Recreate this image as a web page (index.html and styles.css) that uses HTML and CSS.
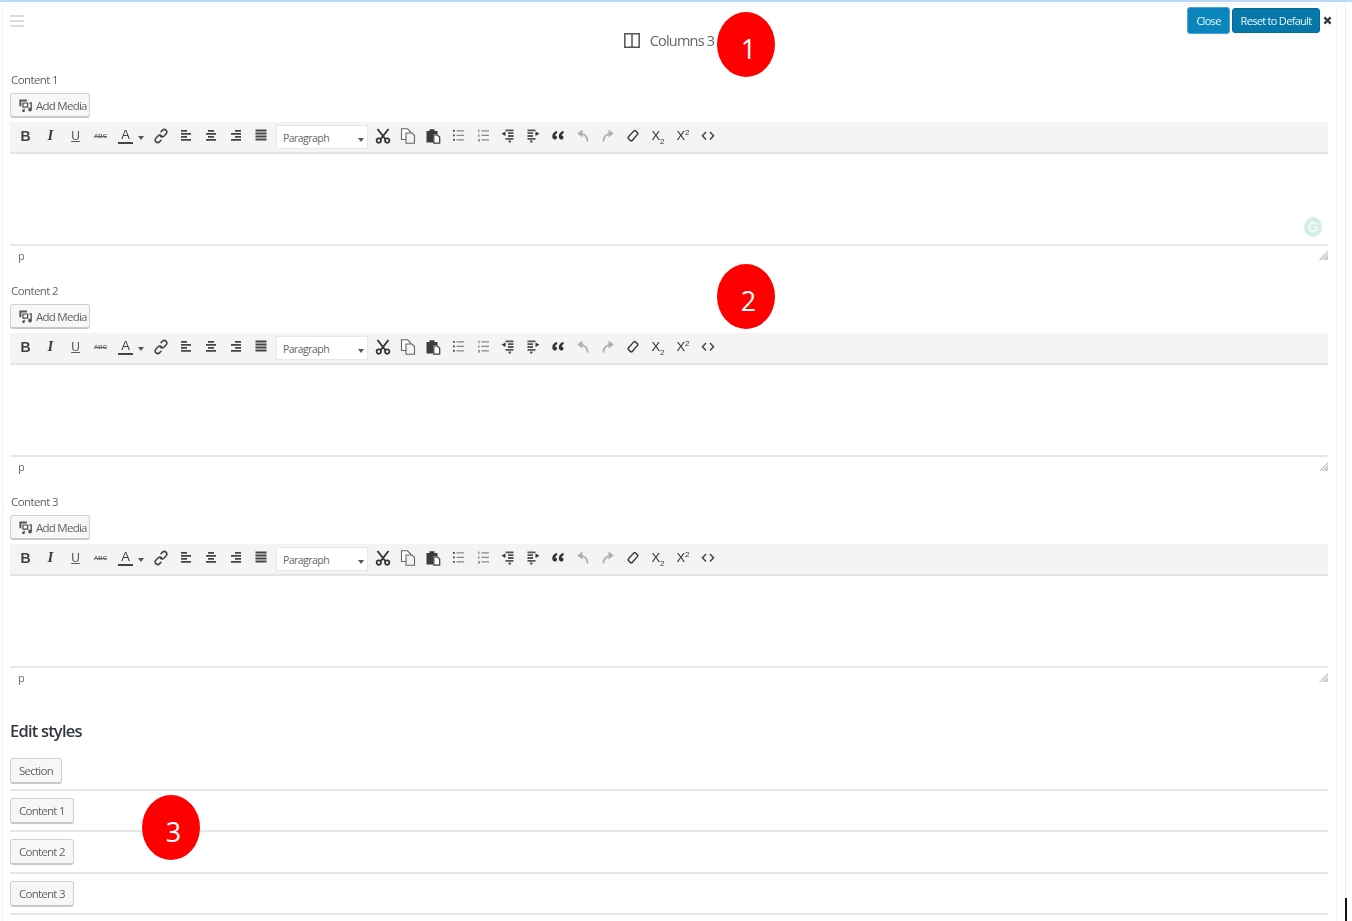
FILE: index.html
```html
<!DOCTYPE html>
<html lang="en">
<head>
<meta charset="utf-8">
<title>Columns 3</title>
<link rel="stylesheet" href="styles.css">
</head>
<body>
<svg class="defs" width="0" height="0" aria-hidden="true">
  <symbol id="i-media" viewBox="0 0 16 16"><path d="M1.500 1.500h8v2.200H3.600v5.200H1.500zM4.600 4.700h6.400v5.600H4.600z" fill="#555"/><path d="M6 6h3.600v3H6z" fill="#f7f7f7"/><path d="M12.200 4.500h2.600v7.700a2 2 0 1 1-1.400-1.800V6h-1.200zM7.300 11.400v2.300a1.500 1.500 0 1 1-1.300-1.400v-.9z" fill="#555"/></symbol>
  <symbol id="i-link" viewBox="0 0 16 16"><g fill="none" stroke="#444" stroke-width="1.600" stroke-linecap="round"><path d="M8 3.700l1.600-1.600a2.300 2.300 0 0 1 3.300 0l.3.300a2.300 2.300 0 0 1 0 3.300L10.800 8.200a2.300 2.300 0 0 1-3.300 0"/><path d="M8 12.300l-1.600 1.600a2.300 2.300 0 0 1-3.300 0l-.3-.3a2.300 2.300 0 0 1 0-3.300L5.200 7.800a2.300 2.300 0 0 1 3.300 0"/></g></symbol>
  <symbol id="i-al" viewBox="0 0 16 16"><path d="M3 2h6v1.800H3zM3 5h10v1.800H3zM3 8h6v1.800H3zM3 11h10v1.800H3z" fill="#444"/></symbol>
  <symbol id="i-ac" viewBox="0 0 16 16"><path d="M5 2h6v1.800H5zM3 5h10v1.800H3zM5 8h6v1.800H5zM3 11h10v1.800H3z" fill="#444"/></symbol>
  <symbol id="i-ar" viewBox="0 0 16 16"><path d="M7 2h6v1.800H7zM3 5h10v1.800H3zM7 8h6v1.800H7zM3 11h10v1.800H3z" fill="#444"/></symbol>
  <symbol id="i-aj" viewBox="0 0 16 16"><path d="M2.500 1.500h11v1.900h-11zM2.500 4.500h11v1.900h-11zM2.500 7.500h11v1.900h-11zM2.500 10.500h11v1.900h-11z" fill="#444"/></symbol>
  <symbol id="i-cut" viewBox="0 0 16 16"><g fill="none" stroke="#333" stroke-width="1.700"><circle cx="3.800" cy="12.600" r="2.200"/><circle cx="12.200" cy="12.600" r="2.200"/><path d="M2.500 1l7.800 10M13.500 1L5.700 11" stroke-width="1.900"/></g></symbol>
  <symbol id="i-copy" viewBox="0 0 16 16"><g fill="#fff" stroke="#666" stroke-width="1.100"><path d="M1.500 .8h6l3 3v7.700h-9z"/><path d="M6 5h6l2.500 2.500v7.700H6z" fill="#f3f3f3"/></g></symbol>
  <symbol id="i-paste" viewBox="0 0 16 16"><path d="M1.500 3h3V1.200h5V3h3v3H8v8.500H1.500z" fill="#3c3c3c"/><path d="M8.800 6.800h3.400l2.500 2.500v5.900H8.800z" fill="#fff" stroke="#3c3c3c" stroke-width="1.200"/></symbol>
  <symbol id="i-ul" viewBox="0 0 16 16"><path d="M3 2h1.800v1.800H3zM3 6.500h1.800v1.800H3zM3 11h1.800v1.800H3z" fill="#444"/><path d="M6.500 2.300H14v1.200H6.500zM6.500 6.800H14V8H6.500zM6.500 11.300H14v1.200H6.500z" fill="#888"/></symbol>
  <symbol id="i-ol" viewBox="0 0 16 16"><path d="M3.400 1.500h1v2.800h-1zM3 6.500h1.800v.8H3.800v.6h1v.6H3zM3 11h1.800v2.400H3v-.6h1v-.3H3.400v-.5h.6v-.3H3z" fill="#777"/><path d="M6.500 2.300H14v1.200H6.500zM6.500 6.800H14V8H6.500zM6.500 11.300H14v1.200H6.500z" fill="#888"/></symbol>
  <symbol id="i-out" viewBox="0 0 16 16"><path d="M5.500 1.500h8v1.800h-8zM8 4.300h5.500v1.800H8zM8 7.100h5.500v1.800H8zM5.500 9.900h8v1.800h-8zM8.500 12.500H11v2H8.500z" fill="#555"/><path d="M5.500 3.500v4.500L1.500 5.800z" fill="#333"/></symbol>
  <symbol id="i-in" viewBox="0 0 16 16"><path d="M2.500 1.500h8v1.800h-8zM2.500 4.300H8v1.800H2.500zM2.500 7.100H8v1.800H2.500zM2.500 9.900h8v1.800h-8zM5 12.500h2.500v2H5z" fill="#555"/><path d="M10.500 3.500v4.500l4-2.200z" fill="#333"/></symbol>
  <symbol id="i-quote" viewBox="0 0 16 16"><path d="M6.800 2.700C4.200 3.800 2.500 5.500 2.300 7.900 2.200 10 3.200 11.500 4.800 11.500c1.300 0 2.200-.9 2.200-2.100 0-1.200-.8-2-1.900-2 .2-1 .9-1.800 2.200-2.500zM13.300 2.700c-2.600 1.100-4.300 2.800-4.500 5.200-.1 2.100.9 3.600 2.500 3.600 1.300 0 2.200-.9 2.200-2.100 0-1.200-.8-2-1.900-2 .2-1 .9-1.800 2.200-2.500z" fill="#333"/></symbol>
  <symbol id="i-undo" viewBox="0 0 16 16"><path d="M12.500 13.500C12.500 8.500 10 5.800 4.500 5.600" fill="none" stroke="#b0b0b0" stroke-width="1.900"/><path d="M7.500 1.500v8L2.200 5.500z" fill="#b0b0b0"/></symbol>
  <symbol id="i-redo" viewBox="0 0 16 16"><path d="M3.500 13.500C3.500 8.500 6 5.800 11.500 5.600" fill="none" stroke="#b0b0b0" stroke-width="1.900"/><path d="M8.500 1.500v8l5.300-4z" fill="#b0b0b0"/></symbol>
  <symbol id="i-erase" viewBox="0 0 16 16"><path d="M3.500 8.800l5.400-5.900a1.200 1.200 0 0 1 1.700 0l1.900 1.800a1.200 1.200 0 0 1 0 1.700L7 12.700H5.600L3.500 10.500a1.200 1.200 0 0 1 0-1.700z" fill="none" stroke="#333" stroke-width="1.400"/></symbol>
  <symbol id="i-code" viewBox="0 0 16 16"><path d="M6 4L2.500 7.800 6 11.600M10 4l3.500 3.800-3.500 3.800" fill="none" stroke="#444" stroke-width="1.500"/></symbol>
  <symbol id="i-cols" viewBox="0 0 16 15"><path d="M.8.800h14.400v13.400H.8zM8 .8v13.400" fill="none" stroke="#555" stroke-width="1.500"/></symbol>
  <symbol id="i-x" viewBox="0 0 10 10"><path d="M1.500 1.500l7 7M8.500 1.500l-7 7" stroke="#2f3a3f" stroke-width="2.500" fill="none"/></symbol>
</svg>

<div class="topline"></div>
<div class="page">
  <main class="panel">
    <header class="head">
      <div class="burger"><i></i><i></i><i></i></div>
      <h1 class="title"><svg class="title-ico"><use href="#i-cols"/></svg><span>Columns 3</span></h1>
      <div class="actions">
        <button class="btn-close">Close</button>
        <button class="btn-reset">Reset to Default</button>
        <svg class="x-ico"><use href="#i-x"/></svg>
      </div>
    </header>

    <section class="field">
      <label class="lbl">Content 1</label>
      <button class="btn media"><svg class="ico"><use href="#i-media"/></svg>Add Media</button>
      <div class="bar">
        <span class="t b">B</span><span class="t it">I</span><span class="t u">U</span><span class="t abc">ABC</span>
        <span class="t color"><span class="a">A</span><i class="caret"></i></span>
        <span class="t"><svg class="ico"><use href="#i-link"/></svg></span><span class="t"><svg class="ico"><use href="#i-al"/></svg></span><span class="t"><svg class="ico"><use href="#i-ac"/></svg></span><span class="t"><svg class="ico"><use href="#i-ar"/></svg></span><span class="t"><svg class="ico"><use href="#i-aj"/></svg></span>
        <span class="sel">Paragraph<i class="caret"></i></span>
        <span class="t"><svg class="ico"><use href="#i-cut"/></svg></span><span class="t"><svg class="ico"><use href="#i-copy"/></svg></span><span class="t"><svg class="ico"><use href="#i-paste"/></svg></span><span class="t"><svg class="ico"><use href="#i-ul"/></svg></span><span class="t"><svg class="ico"><use href="#i-ol"/></svg></span><span class="t"><svg class="ico"><use href="#i-out"/></svg></span><span class="t"><svg class="ico"><use href="#i-in"/></svg></span><span class="t"><svg class="ico"><use href="#i-quote"/></svg></span><span class="t"><svg class="ico"><use href="#i-undo"/></svg></span><span class="t"><svg class="ico"><use href="#i-redo"/></svg></span><span class="t"><svg class="ico"><use href="#i-erase"/></svg></span>
        <span class="t xs"><span>X<sub>2</sub></span></span><span class="t xs"><span>X<sup>2</sup></span></span><span class="t"><svg class="ico"><use href="#i-code"/></svg></span>
      </div>
      <div class="area"><span class="gram">G</span></div>
      <div class="status"><span>p</span><i class="grip"></i></div>
    </section>

    <section class="field">
      <label class="lbl">Content 2</label>
      <button class="btn media"><svg class="ico"><use href="#i-media"/></svg>Add Media</button>
      <div class="bar">
        <span class="t b">B</span><span class="t it">I</span><span class="t u">U</span><span class="t abc">ABC</span>
        <span class="t color"><span class="a">A</span><i class="caret"></i></span>
        <span class="t"><svg class="ico"><use href="#i-link"/></svg></span><span class="t"><svg class="ico"><use href="#i-al"/></svg></span><span class="t"><svg class="ico"><use href="#i-ac"/></svg></span><span class="t"><svg class="ico"><use href="#i-ar"/></svg></span><span class="t"><svg class="ico"><use href="#i-aj"/></svg></span>
        <span class="sel">Paragraph<i class="caret"></i></span>
        <span class="t"><svg class="ico"><use href="#i-cut"/></svg></span><span class="t"><svg class="ico"><use href="#i-copy"/></svg></span><span class="t"><svg class="ico"><use href="#i-paste"/></svg></span><span class="t"><svg class="ico"><use href="#i-ul"/></svg></span><span class="t"><svg class="ico"><use href="#i-ol"/></svg></span><span class="t"><svg class="ico"><use href="#i-out"/></svg></span><span class="t"><svg class="ico"><use href="#i-in"/></svg></span><span class="t"><svg class="ico"><use href="#i-quote"/></svg></span><span class="t"><svg class="ico"><use href="#i-undo"/></svg></span><span class="t"><svg class="ico"><use href="#i-redo"/></svg></span><span class="t"><svg class="ico"><use href="#i-erase"/></svg></span>
        <span class="t xs"><span>X<sub>2</sub></span></span><span class="t xs"><span>X<sup>2</sup></span></span><span class="t"><svg class="ico"><use href="#i-code"/></svg></span>
      </div>
      <div class="area"></div>
      <div class="status"><span>p</span><i class="grip"></i></div>
    </section>

    <section class="field">
      <label class="lbl">Content 3</label>
      <button class="btn media"><svg class="ico"><use href="#i-media"/></svg>Add Media</button>
      <div class="bar">
        <span class="t b">B</span><span class="t it">I</span><span class="t u">U</span><span class="t abc">ABC</span>
        <span class="t color"><span class="a">A</span><i class="caret"></i></span>
        <span class="t"><svg class="ico"><use href="#i-link"/></svg></span><span class="t"><svg class="ico"><use href="#i-al"/></svg></span><span class="t"><svg class="ico"><use href="#i-ac"/></svg></span><span class="t"><svg class="ico"><use href="#i-ar"/></svg></span><span class="t"><svg class="ico"><use href="#i-aj"/></svg></span>
        <span class="sel">Paragraph<i class="caret"></i></span>
        <span class="t"><svg class="ico"><use href="#i-cut"/></svg></span><span class="t"><svg class="ico"><use href="#i-copy"/></svg></span><span class="t"><svg class="ico"><use href="#i-paste"/></svg></span><span class="t"><svg class="ico"><use href="#i-ul"/></svg></span><span class="t"><svg class="ico"><use href="#i-ol"/></svg></span><span class="t"><svg class="ico"><use href="#i-out"/></svg></span><span class="t"><svg class="ico"><use href="#i-in"/></svg></span><span class="t"><svg class="ico"><use href="#i-quote"/></svg></span><span class="t"><svg class="ico"><use href="#i-undo"/></svg></span><span class="t"><svg class="ico"><use href="#i-redo"/></svg></span><span class="t"><svg class="ico"><use href="#i-erase"/></svg></span>
        <span class="t xs"><span>X<sub>2</sub></span></span><span class="t xs"><span>X<sup>2</sup></span></span><span class="t"><svg class="ico"><use href="#i-code"/></svg></span>
      </div>
      <div class="area"></div>
      <div class="status"><span>p</span><i class="grip"></i></div>
    </section>

    <h2 class="styles-h">Edit styles</h2>
    <div class="style-row"><button class="btn">Section</button></div>
    <div class="style-row"><button class="btn">Content 1</button></div>
    <div class="style-row"><button class="btn">Content 2</button></div>
    <div class="style-row"><button class="btn">Content 3</button></div>
  </main>
  <div class="rail"></div>
</div>

<div class="mark mark-1">1</div>
<div class="mark mark-2">2</div>
<div class="mark mark-3">3</div>
<div class="cursor"></div>
</body>
</html>
```

FILE: styles.css
```css
* { box-sizing: border-box; }
html, body { margin: 0; height: 921px; overflow: hidden; background: #fff; }
body {
  font-family: "Open Sans", "Noto Sans", sans-serif;
  font-size: 11.500px;
  letter-spacing: -.6px;
  color: #555d66;
  position: relative;
}
.defs { position: absolute; }
.topline { height: 2px; background: #bcd8f8; }
.page { display: flex; height: 919px; filter: blur(.35px); }

.panel {
  width: 1335px;
  margin: 1px 0 0 2px;
  padding: 0 8px 0 7px;
  border: 1px solid #f4f4f4;
  border-bottom: 0;
  border-radius: 4px 4px 0 0;
}
.rail { width: 1px; margin-left: 8px; background: #ececec; }

.head { height: 68px; display: grid; grid-template-columns: 1fr auto 1fr; position: relative; }
.burger { display: flex; flex-direction: column; gap: 3px; width: 14px; margin: 11px 0 0 0; }
.burger i { height: 2px; background: #dcdcdc; }
.title {
  margin: 27px 0 0;
  display: flex; align-items: center; gap: 10px;
  height: 18px;
  font-size: 14.500px; font-weight: 400; letter-spacing: -.8px; color: #5f666c;
}
.title-ico { width: 16px; height: 15px; }
.actions { display: flex; align-items: flex-start; justify-content: flex-end; margin: 3px -4px 0 0; }
.actions button { font: inherit; font-size: 11px; letter-spacing: -.7px; color: #eef7fb; padding: 0; border-radius: 3px; white-space: nowrap; }
.btn-close { width: 43px; height: 27px; background: #0a85bd; border: 1px solid #4aa5d4; }
.btn-reset { width: 88px; height: 25px; margin: 1px 0 0 2px; background: #0577a8; border: 1px solid #056a96; }
.x-ico { width: 9px; height: 9px; margin: 9px 0 0 3px; }

.field { height: 211px; }
.lbl { display: block; height: 18px; line-height: 16px; color: #5c6368; padding-left: 1px; }
.btn {
  display: inline-flex; align-items: center;
  height: 26px; padding: 0 8px;
  font: inherit; letter-spacing: -.75px; color: #5f6468;
  white-space: nowrap;
  background: #f7f7f7;
  border: 1px solid #d0d0d0; border-bottom: 2px solid #c8c8c8;
  border-radius: 3px;
}
.media { margin-top: 3px; width: 80px; height: 25px; gap: 3px; padding: 0 0 0 7px; }
.ico { width: 16px; height: 16px; display: block; flex: none; }
.media .ico { width: 15px; height: 15px; }

.bar {
  display: flex; align-items: center;
  height: 32px; margin-top: 4px; padding: 0 2px 3px 3px;
  background: #f4f4f4; border-bottom: 2px solid #e4e4e4;
  color: #3c3f42;
  letter-spacing: 0;
}
.t {
  width: 25px; height: 26px; flex: none;
  display: flex; align-items: center; justify-content: center;
  font-family: "Liberation Sans", sans-serif;
  font-size: 13px; line-height: 1;
}
.b { font-weight: 700; font-size: 14px; }
.it { font-weight: 700; font-style: italic; font-family: "Liberation Serif", serif; font-size: 15px; }
.u { text-decoration: underline; font-size: 12px; color: #555; }
.abc { font-size: 6px; font-weight: 700; text-decoration: line-through; color: #666; }
.color { width: 35.500px; justify-content: flex-start; padding-left: 5px; gap: 5px; }
.a { width: 15px; text-align: center; font-size: 13px; line-height: 15px; border-bottom: 2px solid #444; }
.caret { width: 0; height: 0; border: 3px solid transparent; border-top: 4px solid #555; border-bottom: 0; display: block; margin-top: 4px; flex: none; }
.sel {
  width: 92px; height: 24px; flex: none; margin: 3px 2.500px 0 2.500px;
  display: flex; align-items: center; justify-content: space-between;
  padding: 2px 3px 0 6px;
  background: #fff; border: 1px solid #e8e8e8;
  font-size: 10.500px; letter-spacing: -.55px; color: #666;
}
.xs { font-size: 13px; color: #333; }
.xs sub, .xs sup { font-size: 8px; line-height: 0; }

.area { height: 92px; border-bottom: 2px solid #e8e8e8; position: relative; }
.gram {
  position: absolute; right: 6px; top: 63px;
  width: 18px; height: 20px; border-radius: 50%;
  background: #d4f0e5; color: #f2fbf7;
  font: 700 14px/20px "Liberation Sans", sans-serif; text-align: center;
}
.status {
  display: flex; justify-content: space-between; align-items: flex-start;
  padding: 2px 0 0 8px;
  font-size: 11px; line-height: 16px; color: #6a6a6a;
  letter-spacing: 0;
}
.grip {
  width: 10px; height: 10px; margin-top: 2px;
  background:
    repeating-linear-gradient(135deg, transparent 0 1px, rgba(255,255,255,.7) 1px 2px),
    linear-gradient(135deg, transparent 50%, #bdbdbd 50%);
}

.styles-h { margin: 13px 0 14px; height: 26px; font-size: 16.500px; line-height: 26px; font-weight: 600; letter-spacing: -.8px; color: #32373c; }
.style-row { height: 41.33px; border-bottom: 2px solid #e6e6e6; }
.style-row + .style-row { padding-top: 7px; }
.style-row:first-of-type { height: 33px; }

.mark {
  position: absolute;
  width: 58px; height: 65px; border-radius: 50%;
  background: #fe0000; color: #fff;
  font-size: 27px; letter-spacing: 0; line-height: 73px; text-align: center; padding-left: 5px;
}
.mark-1 { left: 717px; top: 12px; }
.mark-2 { left: 717px; top: 264px; }
.mark-3 { left: 142px; top: 795px; }
.cursor { position: absolute; left: 1345px; top: 898px; width: 2px; height: 23px; background: #111; }
```
